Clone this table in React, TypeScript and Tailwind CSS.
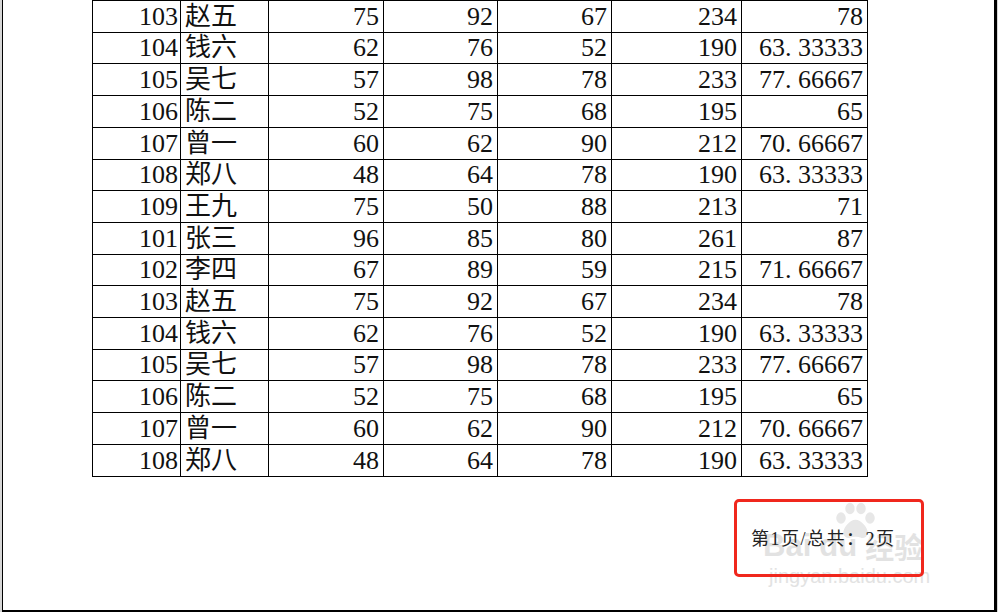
import React from "react";

// one row of the score sheet: id, name, three scores, total, average
type Row = [string, string, string, string, string, string, string];

const rows: Row[] = [
  ["103", "赵五", "75", "92", "67", "234", "78"],
  ["104", "钱六", "62", "76", "52", "190", "63.33333"],
  ["105", "吴七", "57", "98", "78", "233", "77.66667"],
  ["106", "陈二", "52", "75", "68", "195", "65"],
  ["107", "曾一", "60", "62", "90", "212", "70.66667"],
  ["108", "郑八", "48", "64", "78", "190", "63.33333"],
  ["109", "王九", "75", "50", "88", "213", "71"],
  ["101", "张三", "96", "85", "80", "261", "87"],
  ["102", "李四", "67", "89", "59", "215", "71.66667"],
  ["103", "赵五", "75", "92", "67", "234", "78"],
  ["104", "钱六", "62", "76", "52", "190", "63.33333"],
  ["105", "吴七", "57", "98", "78", "233", "77.66667"],
  ["106", "陈二", "52", "75", "68", "195", "65"],
  ["107", "曾一", "60", "62", "90", "212", "70.66667"],
  ["108", "郑八", "48", "64", "78", "190", "63.33333"],
];

// rows are ~31.7px tall, so alternate 32/31 to keep the grid lines in place
const rowHeights = [
  "h-[32px]", "h-[31px]", "h-[32px]", "h-[32px]", "h-[32px]",
  "h-[31px]", "h-[32px]", "h-[32px]", "h-[31px]", "h-[32px]",
  "h-[32px]", "h-[31px]", "h-[32px]", "h-[32px]", "h-[32px]",
];

const colWidths = ["w-[88px]", "w-[88px]", "w-[115px]", "w-[114px]", "w-[114px]", "w-[130px]", "w-[126px]"];

// SimSun-style half-width period
function Num({ value }: { value: string }) {
  if (!value.includes(".")) return <>{value}</>;
  const [a, b] = value.split(".");
  return (
    <>
      {a}
      <span className="inline-block w-[13px] text-left">.</span>
      {b}
    </>
  );
}

function Paw() {
  return (
    <svg width="44" height="38" viewBox="0 0 44 38" fill="#e2e2e2" stroke="#ffffff" strokeWidth="1.5">
      <ellipse cx="8" cy="16" rx="5.5" ry="6.5" />
      <ellipse cx="17" cy="6.5" rx="5.5" ry="6.5" />
      <ellipse cx="28" cy="6.5" rx="5.5" ry="6.5" />
      <ellipse cx="37" cy="16" rx="5.5" ry="6.5" />
      <path d="M22.5 17c-6.5 0-13 8.5-13 14 0 4 4 6.5 7.5 5.5 2-.8 3.5-1 5.5-1s3.5.2 5.5 1c3.5 1 7.5-1.5 7.5-5.5 0-5.5-6.5-14-13-14z" />
    </svg>
  );
}

export default function App() {
  return (
    <div className="h-[612px] w-[998px] overflow-hidden bg-[#d6d6d6] pl-[2px] pr-[1px] text-[#111] [font-family:'Liberation_Serif','Noto_Sans_CJK_SC',serif]">
      <div className="relative h-[612px] border-b-2 border-l border-r-[3px] border-black bg-white">
        <table className="ml-[89px] w-[776px] table-fixed border-collapse text-[26px] leading-[29px] [font-family:'Liberation_Serif','Noto_Sans_CJK_SC',serif]">
          <colgroup>
            {colWidths.map((w, i) => (
              <col key={i} className={w} />
            ))}
          </colgroup>
          <tbody>
            {rows.map((r, i) => (
              <tr key={i} className={rowHeights[i]}>
                {r.map((c, j) => (
                  <td
                    key={j}
                    className={`border border-black p-0 pb-[1px] align-bottom whitespace-nowrap ${
                      j === 1 ? "pl-[4px] text-left" : j === 0 ? "pr-[2px] text-right" : "pr-[4px] text-right"
                    }`}
                  >
                    <Num value={c} />
                  </td>
                ))}
              </tr>
            ))}
          </tbody>
        </table>

        {/* baidu jingyan watermark, behind the footer text */}
        <div className="pointer-events-none absolute left-[760px] top-[502px] flex flex-col items-start text-[#dcdcdc] opacity-80">
          <div className="ml-[70px]">
            <Paw />
          </div>
          <div className="-mt-[9px] flex items-end gap-[8px] text-[31px] font-bold leading-[30px] [font-family:'Liberation_Sans',sans-serif] [text-shadow:0_0_2px_#fff]">
            <span>Bai</span>
            <span>du</span>
            <span className="text-[29px] [font-family:'Noto_Sans_CJK_SC',sans-serif]">经验</span>
          </div>
          <div className="mt-[5px] ml-[6px] text-[20px] leading-[20px] [font-family:'Liberation_Sans',sans-serif] [text-shadow:0_0_2px_#fff]">
            jingyan.baidu.com
          </div>
        </div>

        <div className="relative mt-[52px] ml-[748px] w-max text-[18px] leading-[20px] tracking-[1.5px] text-[#222]">第1页/总共：2页</div>

        {/* red annotation box */}
        <div className="absolute left-[731px] top-[499px] h-[78px] w-[190px] rounded-[5px] border-[3px] border-[#f0271d]" />
      </div>
    </div>
  );
}
